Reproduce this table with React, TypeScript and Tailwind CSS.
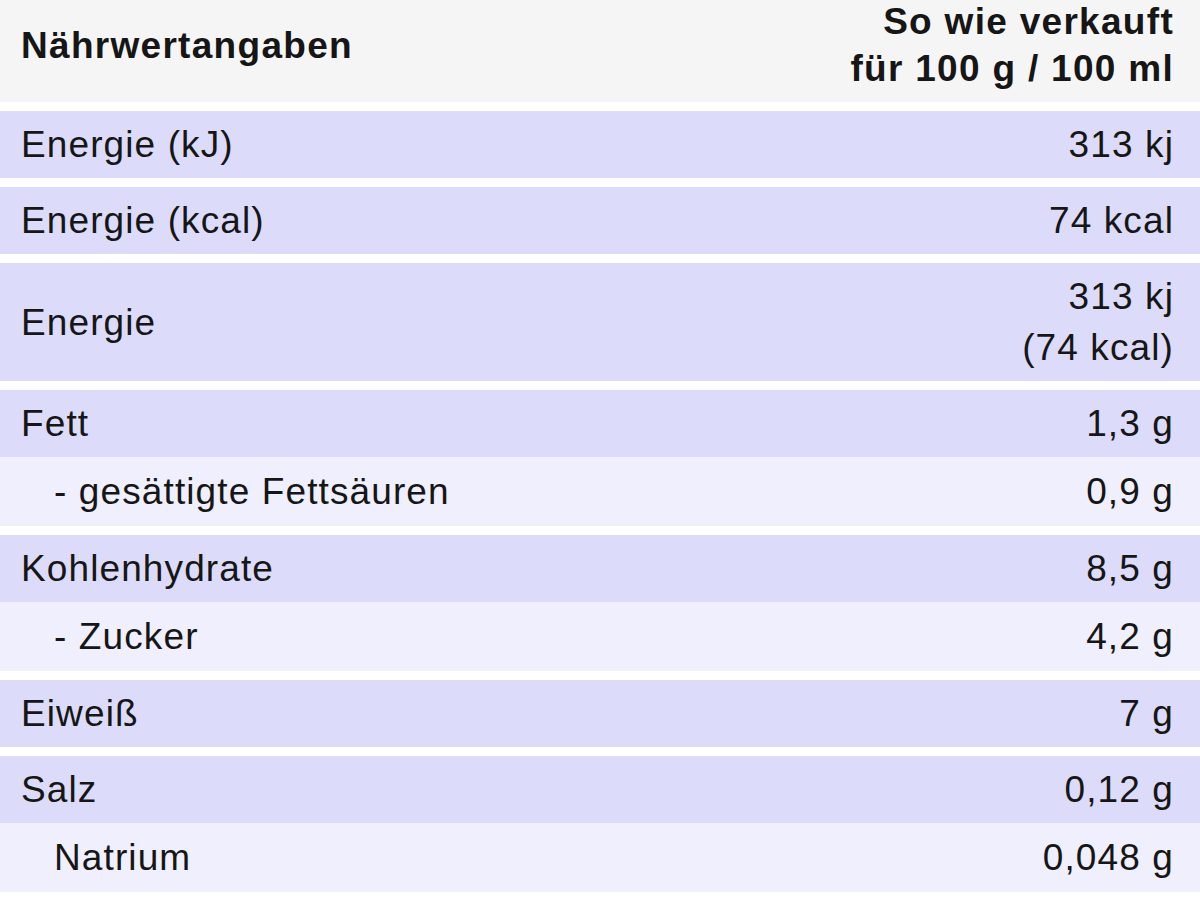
type Row = {
  label: string
  value: string[]
  sub?: boolean
}

const groups: Row[][] = [
  [{ label: 'Energie (kJ)', value: ['313 kj'] }],
  [{ label: 'Energie (kcal)', value: ['74 kcal'] }],
  [{ label: 'Energie', value: ['313 kj', '(74 kcal)'] }],
  [
    { label: 'Fett', value: ['1,3 g'] },
    { label: '- gesättigte Fettsäuren', value: ['0,9 g'], sub: true },
  ],
  [
    { label: 'Kohlenhydrate', value: ['8,5 g'] },
    { label: '- Zucker', value: ['4,2 g'], sub: true },
  ],
  [{ label: 'Eiweiß', value: ['7 g'] }],
  [
    { label: 'Salz', value: ['0,12 g'] },
    { label: 'Natrium', value: ['0,048 g'], sub: true },
  ],
]

export default function App() {
  return (
    <div
      className="min-h-screen bg-white text-[#161616] text-[37px] tracking-[0.03em]"
      style={{ fontFamily: '"Liberation Sans", Arial, Helvetica, sans-serif' }}
    >
      <div className="flex flex-col gap-[9px]">
        <div className="flex items-center justify-between bg-[#f5f5f5] pl-[21px] pr-[26px] h-[102px] pb-[12px] font-bold leading-[47px] tracking-[0.035em]">
          <div>Nährwertangaben</div>
          <div className="text-right">
            <div>So wie verkauft</div>
            <div>für 100 g / 100 ml</div>
          </div>
        </div>

        {groups.map((group, gi) => (
          <div key={gi} className="flex flex-col">
            {group.map((row) => (
              <div
                key={row.label}
                className={
                  'flex items-center justify-between pr-[26px] leading-[51px] ' +
                  (row.sub ? 'bg-[#efeffd] pl-[54px] py-[9px]' : 'bg-[#dcdcfa] pl-[21px] py-[8px]')
                }
              >
                <div>{row.label}</div>
                <div className="text-right">
                  {row.value.map((v) => (
                    <div key={v}>{v}</div>
                  ))}
                </div>
              </div>
            ))}
          </div>
        ))}
      </div>
    </div>
  )
}
